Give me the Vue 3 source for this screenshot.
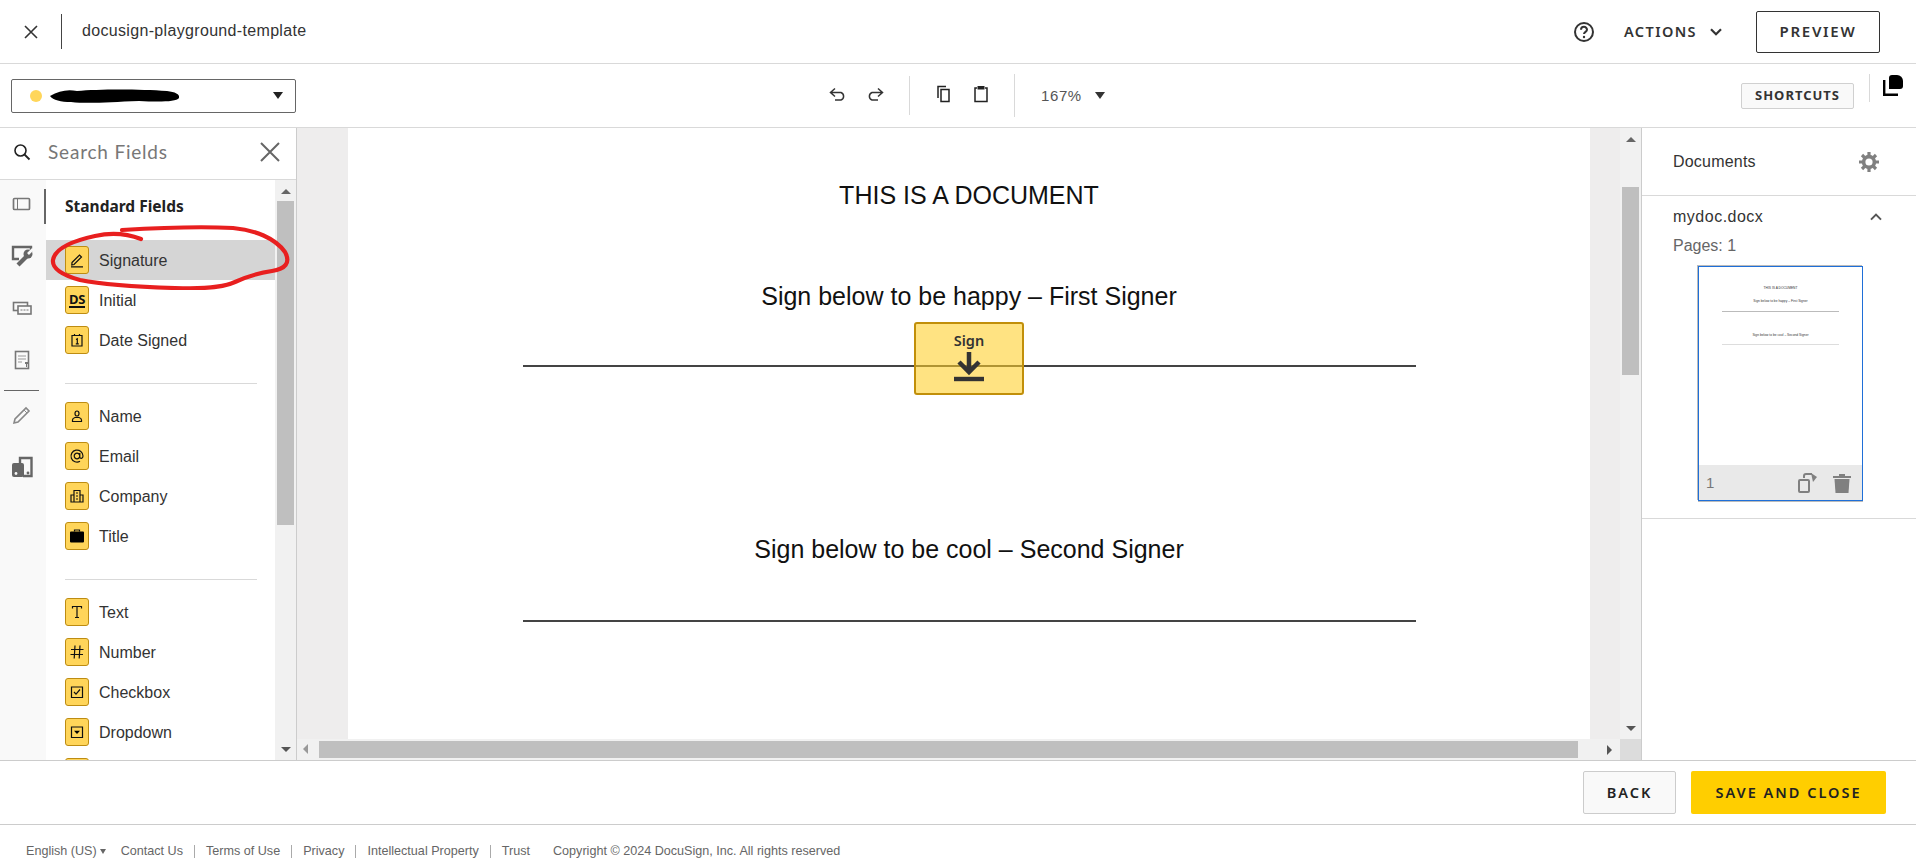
<template>
  <div class="app">
    <header class="topbar">
      <button class="icon-btn close">
        <svg width="16" height="16" viewBox="0 0 16 16"><path d="M2 2l12 12M14 2L2 14" class="st" stroke-width="1.6" /></svg>
      </button>
      <span class="title">docusign-playground-template</span>
      <div class="top-right">
        <svg class="help" width="22" height="22" viewBox="0 0 22 22">
          <circle cx="11" cy="11" r="9" class="st" stroke-width="2" />
          <path d="M8 8.8a3 3 0 0 1 6 0c0 2-3 2.2-3 4.2" class="st" stroke-width="2" />
          <circle cx="11" cy="16" r="1.2" fill="#333" />
        </svg>
        <span class="actions">ACTIONS</span>
        <svg class="chev" width="12" height="8" viewBox="0 0 12 8"><path d="M1 1.2l5 5 5-5" class="st" stroke-width="2.2" /></svg>
        <button class="preview">PREVIEW</button>
      </div>
    </header>

    <div class="toolbar">
      <div class="recipient">
        <span class="dot"></span>
        <svg class="redact" width="132" height="18" viewBox="0 0 132 18">
          <path d="M1 9C10 4 18 2 28 4C50 2 90 2 118 4C126 5 131 7 130 11C127 15 110 15 90 14C60 15 40 17 22 15C12 15 4 13 1 9Z" fill="#000" />
        </svg>
        <span class="caret select-caret"></span>
      </div>
      <div class="tools">
        <svg width="18" height="14" viewBox="0 0 18 14"><path d="M6 1.500L1.500 5.500 6 9.500M2 5.500h10a4 4 0 0 1 0 7.500H6" class="st" stroke-width="1.5" /></svg>
        <svg class="gap-icon" width="18" height="14" viewBox="0 0 18 14"><path d="M12 1.500l4.500 4-4.500 4M16 5.500H6a4 4 0 0 0 0 7.500h6" class="st" stroke-width="1.5" /></svg>
        <span class="tool-sep first"></span>
        <svg width="16" height="18" viewBox="0 0 16 18"><path d="M2 13V1.500h8M5 4.500h8V16.500H5z" class="st-dark" stroke-width="1.5" /></svg>
        <svg class="gap-icon wide" width="16" height="18" viewBox="0 0 16 18"><path d="M4 3H2v13.500h12V3h-2" class="st-dark" stroke-width="1.5" /><rect x="4.500" y="1" width="7" height="3.500" fill="#222" /></svg>
        <span class="tool-sep second"></span>
        <span class="zoom-val">167%</span>
        <span class="caret zoom-caret"></span>
      </div>
      <div class="tool-right">
        <button class="shortcuts">SHORTCUTS</button>
        <span class="tr-sep"></span>
        <svg width="20" height="21" viewBox="0 0 20 21">
          <path d="M6 3a3 3 0 0 1 3-3h5a6 6 0 0 1 6 6v5a3 3 0 0 1-3 3H6z" fill="#000" />
          <path d="M1.200 5v14.800H15" fill="none" stroke="#000" stroke-width="2.400" />
        </svg>
      </div>
    </div>

    <main class="workspace">
      <aside class="left-panel">
        <div class="search">
          <svg width="18" height="18" viewBox="0 0 18 18"><circle cx="7.500" cy="7.500" r="5.500" class="st-dark" stroke-width="1.600" /><path d="M11.500 11.500l5 5" class="st-dark" stroke-width="1.800" /></svg>
          <span class="search-text">Search Fields</span>
          <svg class="search-x" width="20" height="20" viewBox="0 0 20 20"><path d="M1 1l18 18M19 1L1 19" fill="none" stroke="#666" stroke-width="2" /></svg>
        </div>
        <div class="left-body">
          <nav class="rail">
            <span v-for="(r, i) in rail" :key="i" class="rail-wrap">
              <span v-if="i === 4" class="rail-line"></span>
              <span class="rail-item">
                <svg width="24" height="24" viewBox="0 0 24 24" v-html="r"></svg>
              </span>
            </span>
            <span class="rail-active"></span>
          </nav>
          <div class="fields">
            <h3>Standard Fields</h3>
            <template v-for="(group, g) in groups" :key="g">
              <hr v-if="g > 0" />
              <div v-for="f in group" :key="f.name" class="field" :class="{ selected: f.name === 'Signature' }">
                <span class="tag">
                  <span v-if="f.text" class="ds">{{ f.text }}</span>
                  <svg v-else width="16" height="16" viewBox="0 0 16 16">
                    <path :d="f.d" fill="none" stroke="#111" stroke-width="1.200" />
                    <path v-if="f.solid" :d="f.solid" fill="#000" />
                  </svg>
                </span>
                <span class="field-name" v-if="f.name !== 'Note'">{{ f.name }}</span>
              </div>
            </template>
          </div>
          <div class="vbar left-bar">
            <span class="arrow up"></span>
            <span class="thumb"></span>
            <span class="arrow down"></span>
          </div>
        </div>
      </aside>

      <section class="doc-area">
        <div class="canvas">
          <div class="page">
            <h1>THIS IS A DOCUMENT</h1>
            <p class="first-line">Sign below to be happy – First Signer</p>
            <div class="rule rule-one"></div>
            <p class="second-line">Sign below to be cool – Second Signer</p>
            <div class="rule rule-two"></div>
            <div class="sign-tab">
              <span>Sign</span>
              <svg width="30" height="30" viewBox="0 0 30 30">
                <path d="M15 0v20M5 10l10 10 10-10" fill="none" stroke="#333" stroke-width="4.500" />
                <path d="M0 27h30" stroke="#333" stroke-width="4.400" />
              </svg>
            </div>
          </div>
        </div>
        <div class="vbar doc-bar">
          <span class="arrow up"></span>
          <span class="thumb"></span>
          <span class="arrow down"></span>
        </div>
        <div class="hbar">
          <span class="arrow left"></span>
          <span class="hthumb"></span>
          <span class="arrow right"></span>
        </div>
        <div class="corner"></div>
      </section>

      <aside class="right-panel">
        <div class="docs-head">
          <span>Documents</span>
          <svg width="20" height="20" viewBox="0 0 20 20">
            <circle cx="10" cy="10" r="5.400" fill="none" stroke="#808080" stroke-width="3.600" />
            <path d="M10 0v4M10 16v4M0 10h4M16 10h4M3 3l2.800 2.800M14.200 14.200L17 17M17 3l-2.800 2.800M5.800 14.200L3 17" stroke="#808080" stroke-width="3.200" />
          </svg>
        </div>
        <div class="doc-entry">
          <div class="doc-name">
            <span>mydoc.docx</span>
            <svg width="12" height="8" viewBox="0 0 12 8"><path d="M1 6.600l5-5 5 5" fill="none" stroke="#555" stroke-width="2" /></svg>
          </div>
          <div class="pages">Pages: 1</div>
          <div class="thumbnail">
            <div class="thumb-page">
              <small class="t1">THIS IS A DOCUMENT</small>
              <small class="t2">Sign below to be happy – First Signer</small>
              <i class="l1"></i>
              <small class="t3">Sign below to be cool – Second Signer</small>
              <i class="l2"></i>
            </div>
            <div class="thumb-foot">
              <span>1</span>
              <svg class="rot" width="20" height="20" viewBox="0 0 20 20">
                <rect x="1" y="7" width="10" height="12" rx="1" fill="none" stroke="#808080" stroke-width="2" />
                <path d="M6 5V3a2 2 0 0 1 2-2h6" fill="none" stroke="#808080" stroke-width="2" />
                <path d="M13 0l6 4-4 5z" fill="#808080" />
              </svg>
              <svg width="20" height="20" viewBox="0 0 20 20">
                <path d="M1 3h18v2H1zM7 1h6v2H7z" fill="#808080" />
                <path d="M2.500 6h15l-1 14h-13z" fill="#808080" />
              </svg>
            </div>
          </div>
        </div>
      </aside>
    </main>

    <div class="action-bar">
      <button class="back">BACK</button>
      <button class="save">SAVE AND CLOSE</button>
    </div>

    <footer class="footer">
      <span class="lang">English (US)</span>
      <span class="lang-caret"></span>
      <a class="contact">Contact Us</a><b></b>
      <a>Terms of Use</a><b></b>
      <a>Privacy</a><b></b>
      <a>Intellectual Property</a><b></b>
      <a>Trust</a>
      <span class="copy">Copyright © 2024 DocuSign, Inc. All rights reserved</span>
    </footer>

    <svg class="scribble" width="300" height="110" viewBox="0 0 300 110">
      <path d="M122 50C155 48 195 46 233 48C255 50 275 58 285 72C291 83 285 89 272 91C258 93 248 96 235 102C222 108 200 109 175 108C140 107 105 105 80 100C62 95 52 88 53 80C55 68 72 61 95 56C112 52 128 54 141 59" fill="none" stroke="#e81f1f" stroke-width="4.200" stroke-linecap="round" />
    </svg>
  </div>
</template>

<script setup>
const rail = [
  '<rect x="3.500" y="6.500" width="16" height="11" rx="1" fill="none" stroke="#777" stroke-width="1.700"/><path d="M7.500 7v10" stroke="#777"/>',
  '<path d="M9 15H3V3h18v5" fill="none" stroke="#666" stroke-width="2.400"/><path d="M8 21l9-9" stroke="#666" stroke-width="4.200"/><circle cx="18" cy="10" r="4.500" fill="#666"/><path d="M18 10l5-5" stroke="#f9f9f9" stroke-width="2.600"/>',
  '<rect x="3.500" y="6.500" width="14" height="8" fill="#f9f9f9" stroke="#777" stroke-width="1.600"/><rect x="8" y="10" width="13" height="8" fill="#f9f9f9" stroke="#777" stroke-width="1.600"/><path d="M10.500 14h8" stroke="#777" stroke-dasharray="2 1"/>',
  '<rect x="5.500" y="3.500" width="13" height="17" fill="none" stroke="#777" stroke-width="1.600"/><path d="M8 8h8M8 11h8M8 14h4" stroke="#999"/><path d="M15 14h3v2h-1v3h-1v-3h-1z" fill="#777"/>',
  '<path d="M4 20l1-4L16 5l3 3L8 19z" fill="none" stroke="#888" stroke-width="1.600"/><path d="M14 7l3 3" stroke="#888"/>',
  '<path d="M10 8V3h11.500v18H13" fill="none" stroke="#666" stroke-width="2.400"/><rect x="2" y="8" width="12" height="14" rx="2" fill="#666"/><circle cx="6" cy="18.500" r="1.400" fill="#f9f9f9"/><circle cx="18" cy="18" r="1.400" fill="#666"/>'
]

const groups = [
  [
    { name: 'Signature', d: 'M3 10.500L10.500 3l2 2L5 12.500 2.800 13zM2 14.800h12' },
    { name: 'Initial', text: 'DS' },
    { name: 'Date Signed', d: 'M3 3.500h10v10.500H3zM5.500 2v2M10.500 2v2M7 7.500L8.300 6.800v5M6.800 11.800h3' }
  ],
  [
    { name: 'Name', d: 'M6 5.500a2 2.500 0 1 0 4 0a2 2.500 0 1 0-4 0M3.500 13.500v-1.500c0-1.500 1-2 2.500-2.500h4c1.500 .5 2.500 1 2.500 2.500v1.500z' },
    { name: 'Email', d: 'M10.800 8a2.800 2.800 0 1 1-5.600 0a2.800 2.800 0 1 1 5.600 0M10.800 5v4c0 2 3.200 2 3.200-1a6 6 0 1 0-3 5.300' },
    { name: 'Company', d: 'M5 14V2.500h6V14M5 7H2v7h12V7h-3M1.500 14h13M7 5h2M7 8h2M7 11h2' },
    { name: 'Title', d: 'M5.500 3.500V2h5v1.500', solid: 'M1 4.500a1 1 0 0 1 1-1h12a1 1 0 0 1 1 1v9a1 1 0 0 1-1 1H2a1 1 0 0 1-1-1z' }
  ],
  [
    { name: 'Text', d: 'M3.500 4.500V2.500h9v2M8 2.500v11M6 13.500h4' },
    { name: 'Number', d: 'M6 1.500l-.8 13M11 1.500l-.8 13M2 5.500h12.500M1.500 10.500h12.500' },
    { name: 'Checkbox', d: 'M2.500 3h11v10.500h-11zM5 8l2 2.200L11 5.500' },
    { name: 'Dropdown', d: 'M2.500 3h11v10.500h-11z', solid: 'M5 6.800h6L8 10z' },
    { name: 'Note', d: 'M3 3h10v10H3z' }
  ]
]
</script>

<style>
html, body { margin: 0; padding: 0; background: #fff; }
</style>

<style scoped>
.app {
  position: relative;
  width: 1916px;
  height: 867px;
  overflow: hidden;
  display: flex;
  flex-direction: column;
  font-family: "Liberation Sans", Arial, sans-serif;
  color: #222;
}
button { font-family: "Noto Sans", sans-serif; cursor: pointer; }
.st { fill: none; stroke: #333; }
.st-dark { fill: none; stroke: #222; }

.topbar {
  height: 63px;
  flex: none;
  display: flex;
  align-items: center;
  border-bottom: 1px solid #d9d9d9;
}
.icon-btn { border: 0; background: none; padding: 0; display: flex; }
.close {
  width: 62px;
  height: 35px;
  align-items: center;
  justify-content: center;
  border-right: 1px solid #444;
  margin-right: 20px;
}
.title { font-size: 16px; color: #333; letter-spacing: .33px; margin-bottom: 2px; }
.top-right { margin-left: auto; display: flex; align-items: center; padding-right: 36px; }
.help { margin-right: 29px; }
.actions {
  font: 600 14.500px "Noto Sans", sans-serif;
  letter-spacing: 1.400px;
  color: #333;
  margin: 0 13px 2px 0;
}
.chev { margin-right: 34px; }
.preview {
  width: 124px;
  height: 42px;
  border: 1px solid #333;
  border-radius: 2px;
  background: #fff;
  font-size: 15px;
  font-weight: 600;
  letter-spacing: 1.700px;
  color: #333;
  padding: 0 0 2px;
}

.toolbar {
  height: 63px;
  flex: none;
  display: flex;
  align-items: center;
  border-bottom: 1px solid #d9d9d9;
  position: relative;
}
.recipient {
  margin-left: 11px;
  width: 285px;
  height: 34px;
  box-sizing: border-box;
  border: 1px solid #666;
  border-radius: 2px;
  display: flex;
  align-items: center;
  padding-left: 18px;
}
.dot { width: 12px; height: 12px; border-radius: 50%; background: #ffd65a; margin-right: 7px; }
.caret {
  width: 0;
  height: 0;
  border-left: 5.500px solid transparent;
  border-right: 5.500px solid transparent;
  border-top: 7px solid #222;
}
.select-caret { margin-left: auto; margin-right: 12px; }
.tools { margin-left: 533px; display: flex; align-items: center; }
.tools svg { margin-bottom: 4px; }
.gap-icon { margin-left: 19px; }
.gap-icon.wide { margin-left: 21px; }
.tool-sep { width: 1px; background: #d9d9d9; }
.tool-sep.first { height: 39px; margin: 0 26px 0 25px; }
.tool-sep.second { height: 43px; margin: 0 26px 0 25px; }
.zoom-val { font-size: 15px; color: #555; letter-spacing: .6px; margin-right: 13px; }
.zoom-caret { border-top-color: #333; }
.tool-right {
  margin-left: auto;
  display: flex;
  align-items: center;
  padding-right: 13px;
  height: 100%;
}
.shortcuts {
  width: 113px;
  height: 26px;
  padding: 0 0 2px;
  border: 1px solid #d0d0d0;
  border-radius: 2px;
  background: #f9f9f9;
  font-size: 13px;
  font-weight: 700;
  letter-spacing: 1px;
  color: #333;
}
.tr-sep { width: 1px; height: 28px; background: #d9d9d9; margin: -16px 13px 0 15px; }
.tool-right svg { margin-top: -21px; }

.workspace { height: 632px; flex: none; display: flex; min-height: 0; border-bottom: 1px solid #ccc; }

.left-panel {
  width: 296px;
  flex: none;
  display: flex;
  flex-direction: column;
  border-right: 1px solid #ccc;
}
.search {
  height: 48px;
  padding-bottom: 3px;
  flex: none;
  display: flex;
  align-items: center;
  padding-left: 13px;
  border-bottom: 1px solid #d9d9d9;
}
.search-text { font: 19px Lato, sans-serif; color: #777; margin: 0 0 2px 17px; letter-spacing: .8px; }
.search-x { margin-left: auto; margin-right: 16px; }
.left-body { flex: 1; display: flex; min-height: 0; overflow: hidden; }
.rail {
  width: 46px;
  flex: none;
  background: #f9f9f9;
  position: relative;
  display: flex;
  flex-direction: column;
}
.rail-wrap { display: block; }
.rail-item {
  display: flex;
  align-items: center;
  justify-content: center;
  height: 48px;
  margin-bottom: 4px;
  padding-right: 2px;
}
.rail-line { display: block; height: 1px; background: #666; margin: 2px 7px 0 4px; }
.rail-active { position: absolute; right: 0; top: 9px; width: 2px; height: 35px; background: #666; }

.fields { width: 229px; flex: none; background: #fff; overflow: hidden; }
.fields h3 {
  margin: 0;
  padding: 16px 0 0 19px;
  height: 60px;
  box-sizing: border-box;
  font: 700 15.500px/21px "Noto Sans", sans-serif;
  color: #222;
}
.field {
  height: 40px;
  display: flex;
  align-items: center;
  padding-left: 19px;
}
.field.selected { background: #d5d5d5; }
.tag {
  width: 24px;
  height: 28px;
  box-sizing: border-box;
  flex: none;
  border: 1px solid #bd8c12;
  border-radius: 3px;
  background: #ffd55a;
  display: flex;
  align-items: center;
  justify-content: center;
}
.ds {
  font: 700 13px/13px "Noto Sans", sans-serif;
  color: #111;
  border-bottom: 2px solid #111;
  letter-spacing: -.4px;
}
.field-name { margin-left: 10px; padding-top: 1px; font-size: 16px; color: #333; }
.fields hr { border: 0; border-top: 1px solid #d9d9d9; margin: 23px 18px 12px 19px; }

.vbar { width: 21px; flex: none; background: #f1f1f1; position: relative; display: flex; flex-direction: column; align-items: center; }
.left-bar .thumb { display: block; width: 17px; height: 324px; background: #bfbfbf; margin-top: 21px; }
.doc-bar .thumb { display: block; width: 17px; height: 188px; background: #bfbfbf; margin-top: 59px; }
.arrow { position: absolute; width: 0; height: 0; }
.arrow.up {
  top: 9px;
  border-left: 5px solid transparent;
  border-right: 5px solid transparent;
  border-bottom: 5px solid #666;
}
.arrow.down {
  bottom: 8px;
  border-left: 5px solid transparent;
  border-right: 5px solid transparent;
  border-top: 5px solid #555;
}

.doc-area {
  flex: none;
  width: 1345px;
  display: grid;
  grid-template-columns: 1323px 21px;
  grid-template-rows: 611px 21px;
  border-right: 1px solid #ccc;
  box-sizing: border-box;
}
.canvas { background: #eeeded; padding-left: 51px; padding-right: 30px; overflow: hidden; }
.page {
  position: relative;
  height: 100%;
  background: #fff;
  text-align: center;
  color: #111;
  overflow: hidden;
}
.page h1 { margin: 0; padding-top: 53px; font: 400 25px/28px "Liberation Sans", sans-serif; }
.page p { margin: 0; font-size: 25px; line-height: 28px; }
.first-line { padding-top: 73px; }
.rule { height: 2px; width: 893px; margin: 0 auto; background: #444; }
.rule-one { margin-top: 55px; }
.second-line { padding-top: 168px; }
.rule-two { margin-top: 57px; }
.sign-tab {
  position: absolute;
  left: 566px;
  top: 194px;
  width: 110px;
  height: 73px;
  box-sizing: border-box;
  border: 2px solid #c18f0a;
  border-radius: 3px;
  background: rgba(255, 206, 40, .58);
  display: flex;
  flex-direction: column;
  align-items: center;
  font: 600 14.500px/16px "Noto Sans", sans-serif;
  color: #333;
  padding-top: 8px;
}
.sign-tab svg { margin-top: 4px; }

.hbar { background: #f1f1f1; position: relative; }
.hthumb { position: absolute; left: 22px; top: 2px; width: 1259px; height: 17px; background: #bfbfbf; }
.arrow.left {
  left: 6px;
  top: 5px;
  border-top: 5px solid transparent;
  border-bottom: 5px solid transparent;
  border-right: 5px solid #999;
}
.arrow.right {
  right: 8px;
  top: 6px;
  border-top: 5px solid transparent;
  border-bottom: 5px solid transparent;
  border-left: 5px solid #555;
}
.corner { background: #dcdcdc; }

.right-panel { flex: 1; min-width: 0; }
.docs-head {
  height: 67px;
  display: flex;
  align-items: center;
  justify-content: space-between;
  padding: 0 37px 0 31px;
  border-bottom: 1px solid #d9d9d9;
  font-size: 16px;
  letter-spacing: .2px;
  color: #333;
}
.doc-entry { height: 323px; box-sizing: border-box; border-bottom: 1px solid #d9d9d9; padding: 11px 0 0 31px; }
.doc-name { display: flex; align-items: center; justify-content: space-between; padding-right: 34px; font-size: 16px; letter-spacing: .5px; line-height: 20px; color: #333; }
.pages { margin-top: 10px; font-size: 16px; line-height: 18px; color: #666; }
.thumbnail {
  margin: 11px 0 0 25px;
  width: 165px;
  height: 235px;
  box-sizing: border-box;
  border: 1px solid #1f6fd8;
  box-shadow: -1px -1px 0 #bbb, 0 1px 0 #bbb;
  display: flex;
  flex-direction: column;
}
.thumb-page { flex: 1; background: #fff; position: relative; }
.thumb-page small {
  position: absolute;
  left: 0;
  right: 0;
  text-align: center;
  font-size: 3.280px;
  line-height: 4px;
  color: #333;
}
.thumb-page i { position: absolute; left: 23px; width: 117px; height: 1px; background: #bbb; }
.t1 { top: 19px; }
.t2 { top: 32px; }
.t3 { top: 66px; }
.l1 { top: 44px; }
.l2 { top: 77px; background: #ddd !important; }
.thumb-foot {
  height: 35px;
  flex: none;
  background: #e9e9e9;
  display: flex;
  align-items: center;
  padding: 0 10px 0 7px;
  font-size: 15px;
  color: #777;
}
.thumb-foot .rot { margin-left: auto; margin-right: 14px; }

.action-bar {
  height: 63px;
  flex: none;
  display: flex;
  justify-content: flex-end;
  align-items: center;
  gap: 15px;
  padding-right: 30px;
  border-bottom: 1px solid #ccc;
}
.back, .save {
  height: 43px;
  border-radius: 2px;
  font-size: 14.500px;
  font-weight: 600;
  letter-spacing: 2px;
  color: #222;
  padding: 0 0 2px;
}
.back { width: 93px; border: 1px solid #ccc; background: #f9f9f9; }
.save { width: 195px; border: 0; background: #ffce00; }

.footer {
  flex: 1;
  display: flex;
  align-items: center;
  padding: 10px 0 0 26px;
  font-size: 12.600px;
  color: #666;
}
.lang-caret {
  width: 0;
  height: 0;
  margin-left: 3px;
  border-left: 3.500px solid transparent;
  border-right: 3.500px solid transparent;
  border-top: 5px solid #666;
}
.contact { margin-left: 15px; }
.footer b { width: 1px; height: 13px; background: #aaa; margin: 0 11px; }
.copy { margin-left: 23px; }

.scribble { position: absolute; left: 0; top: 180px; pointer-events: none; }
</style>
